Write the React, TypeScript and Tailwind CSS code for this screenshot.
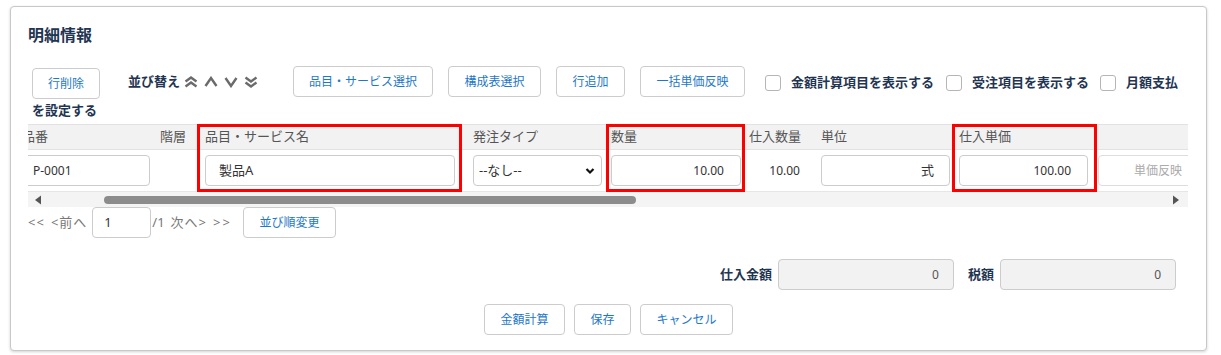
import React from "react";

const btn =
  "h-[31px] border border-[#cccccc] rounded-[4px] bg-white text-[12px] text-[#1e78c8] flex items-center justify-center shrink-0";
const inp =
  "h-[31px] border border-[#cccccc] rounded-[4px] bg-white flex items-center text-[12px] text-[#333]";

function DoubleUp() {
  return (
    <svg width="14" height="12" viewBox="0 0 14 12" className="shrink-0">
      <path d="M1.5 5.5 L7 1.5 L12.5 5.5 M1.5 10.5 L7 6.5 L12.5 10.5" fill="none" stroke="#6b6b6b" strokeWidth="2.4" />
    </svg>
  );
}
function Up() {
  return (
    <svg width="14" height="12" viewBox="0 0 14 12" className="shrink-0">
      <path d="M1.5 10 L7 2 L12.5 10" fill="none" stroke="#6b6b6b" strokeWidth="2.4" />
    </svg>
  );
}
function Down() {
  return (
    <svg width="14" height="12" viewBox="0 0 14 12" className="shrink-0">
      <path d="M1.5 2 L7 10 L12.5 2" fill="none" stroke="#6b6b6b" strokeWidth="2.4" />
    </svg>
  );
}
function DoubleDown() {
  return (
    <svg width="14" height="12" viewBox="0 0 14 12" className="shrink-0">
      <path d="M1.5 1.5 L7 5.5 L12.5 1.5 M1.5 6.5 L7 10.5 L12.5 6.5" fill="none" stroke="#6b6b6b" strokeWidth="2.4" />
    </svg>
  );
}

function Check({ label, ml }: { label: string; ml: string }) {
  return (
    <div className={`flex items-center ${ml}`}>
      <span className="w-[16px] h-[16px] border border-[#b5b5b5] rounded-[3px] bg-white shrink-0" />
      <span className="ml-[10px] text-[13px] font-bold text-[#1f3552] whitespace-nowrap">{label}</span>
    </div>
  );
}

const headCls = "h-[26px] bg-[#f2f2f2] border-t border-b border-[#e2e2e2] flex items-center text-[13px] text-[#555] whitespace-nowrap";
const rowCls = "h-[42px] border-b border-[#e6e6e6] flex items-center";
const red = "outline-[3px] outline-solid outline-[#ff0000] -outline-offset-[3px]";

export default function App() {
  return (
    <div className="min-h-[355px] bg-white pt-[6px] pl-[10px] font-['Noto_Sans','Noto_Sans_CJK_JP',sans-serif]">
      <div className="w-[1197px] h-[345px] border border-[#c8c8c8] rounded-[4px] shadow-[0_1px_3px_rgba(0,0,0,0.18)] bg-white pl-[17px] pt-[18px] pr-[30px]">
        <div className="text-[16px] leading-[20px] font-bold text-[#1f3552]">明細情報</div>

        {/* toolbar */}
        <div className="mt-[21px] pl-[4px] h-[33px] flex items-start">
          <button className={`${btn} w-[68px] mt-[2px]`}>行削除</button>
          <div className="ml-[28px] h-[31px] flex items-center">
            <span className="text-[13px] font-bold text-[#1f3552] whitespace-nowrap">並び替え</span>
            <div className="ml-[4px] flex items-center gap-[6px]">
              <DoubleUp />
              <Up />
              <Down />
              <DoubleDown />
            </div>
          </div>
          <button className={`${btn} w-[140px] ml-[35px]`}>品目・サービス選択</button>
          <button className={`${btn} w-[93px] ml-[15px]`}>構成表選択</button>
          <button className={`${btn} w-[69px] ml-[15px]`}>行追加</button>
          <button className={`${btn} w-[105px] ml-[15px]`}>一括単価反映</button>
          <div className="h-[33px] flex items-center">
            <Check label="金額計算項目を表示する" ml="ml-[20px]" />
            <Check label="受注項目を表示する" ml="ml-[12px]" />
            <Check label="月額支払" ml="ml-[11px]" />
          </div>
        </div>
        <div className="pl-[4px] text-[13px] leading-[18px] font-bold text-[#1f3552] mt-[2px]">を設定する</div>

        {/* table */}
        <div className="mt-[5px] w-[1160px] overflow-hidden">
          <div className="ml-[-11px] flex w-max">
            <div className="w-[138px] pl-[5px] shrink-0">
              <div className={headCls}>品番</div>
              <div className={rowCls}>
                <div className={`${inp} w-[128px] pl-[10px]`}>P-0001</div>
              </div>
            </div>
            <div className="w-[42px] shrink-0">
              <div className={`${headCls} pl-[5px]`}>階層</div>
              <div className={rowCls} />
            </div>
            <div className={`w-[265px] shrink-0 ${red}`}>
              <div className={`${headCls} pl-[8px]`}>品目・サービス名</div>
              <div className={`${rowCls} pl-[8px]`}>
                <div className={`${inp} w-[250px] pl-[13px] text-[13px]`}>製品A</div>
              </div>
            </div>
            <div className="w-[144px] shrink-0">
              <div className={`${headCls} pl-[11px]`}>発注タイプ</div>
              <div className={`${rowCls} pl-[11px]`}>
                <div className={`${inp} w-[129px] pl-[5px] pr-[6px] justify-between text-[13px]`}>
                  <span>--なし--</span>
                  <svg width="10" height="8" viewBox="0 0 10 8">
                    <path d="M1.5 2 L5 5.5 L8.5 2" fill="none" stroke="#111" strokeWidth="2.2" />
                  </svg>
                </div>
              </div>
            </div>
            <div className={`w-[139px] shrink-0 ${red}`}>
              <div className={`${headCls} pl-[5px]`}>数量</div>
              <div className={`${rowCls} pl-[5px]`}>
                <div className={`${inp} w-[130px] justify-end pr-[16px]`}>10.00</div>
              </div>
            </div>
            <div className="w-[72px] shrink-0">
              <div className={`${headCls} pl-[4px]`}>仕入数量</div>
              <div className={`${rowCls} justify-end pr-[17px] text-[12px] text-[#333]`}>10.00</div>
            </div>
            <div className="w-[135px] shrink-0">
              <div className={`${headCls} pl-[4px]`}>単位</div>
              <div className={`${rowCls} pl-[4px]`}>
                <div className={`${inp} w-[129px] justify-end pr-[15px] text-[13px]`}>式</div>
              </div>
            </div>
            <div className={`w-[145px] shrink-0 ${red}`}>
              <div className={`${headCls} pl-[7px]`}>仕入単価</div>
              <div className={`${rowCls} pl-[7px]`}>
                <div className={`${inp} w-[129px] justify-end pr-[16px]`}>100.00</div>
              </div>
            </div>
            <div className="w-[120px] shrink-0">
              <div className={headCls} />
              <div className={`${rowCls} pl-[1px]`}>
                <div className="h-[31px] w-[100px] border border-[#dddddd] rounded-[4px] bg-white flex items-center pl-[35px] text-[12px] text-[#aaa] whitespace-nowrap">
                  単価反映
                </div>
              </div>
            </div>
          </div>
          {/* scrollbar */}
          <div className="h-[15px] bg-[#f4f4f4] flex items-center relative">
            <svg width="8" height="10" viewBox="0 0 8 10" className="ml-[6px] shrink-0">
              <path d="M7 0.5 L1 5 L7 9.5 Z" fill="#555" />
            </svg>
            <div className="ml-[62px] w-[532px] h-[8px] rounded-full bg-[#8c8c8c]" />
            <svg width="8" height="10" viewBox="0 0 8 10" className="ml-auto mr-[8px] shrink-0">
              <path d="M1 0.5 L7 5 L1 9.5 Z" fill="#555" />
            </svg>
          </div>
        </div>

        {/* pagination */}
        <div className="h-[31px] flex items-center text-[13px] text-[#777] whitespace-nowrap">
          <span className="tracking-[1px]">&lt;&lt;</span>
          <span className="ml-[6px] tracking-[1px]">&lt;前へ</span>
          <div className={`${inp} w-[59px] ml-[5px] pl-[11px] text-[13px]`}>1</div>
          <span className="ml-[1px]">/1</span>
          <span className="ml-[6px] tracking-[1px]">次へ&gt;</span>
          <span className="ml-[6px] tracking-[2px]">&gt;&gt;</span>
          <button className={`${btn} w-[93px] ml-[11px]`}>並び順変更</button>
        </div>

        {/* totals */}
        <div className="mt-[21px] flex items-center justify-end">
          <span className="text-[13px] font-bold text-[#1f3552]">仕入金額</span>
          <div className="ml-[6px] w-[176px] h-[31px] border border-[#cccccc] rounded-[4px] bg-[#f2f2f2] flex items-center justify-end pr-[14px] text-[12px] text-[#555]">0</div>
          <span className="ml-[14px] text-[13px] font-bold text-[#1f3552]">税額</span>
          <div className="ml-[6px] w-[176px] h-[31px] border border-[#cccccc] rounded-[4px] bg-[#f2f2f2] flex items-center justify-end pr-[14px] text-[12px] text-[#555]">0</div>
        </div>

        {/* bottom buttons */}
        <div className="mt-[14px] flex justify-center gap-[9px] -ml-[17px] -mr-[30px]">
          <button className={`${btn} w-[81px]`}>金額計算</button>
          <button className={`${btn} w-[57px]`}>保存</button>
          <button className={`${btn} w-[93px]`}>キャンセル</button>
        </div>
      </div>
    </div>
  );
}
